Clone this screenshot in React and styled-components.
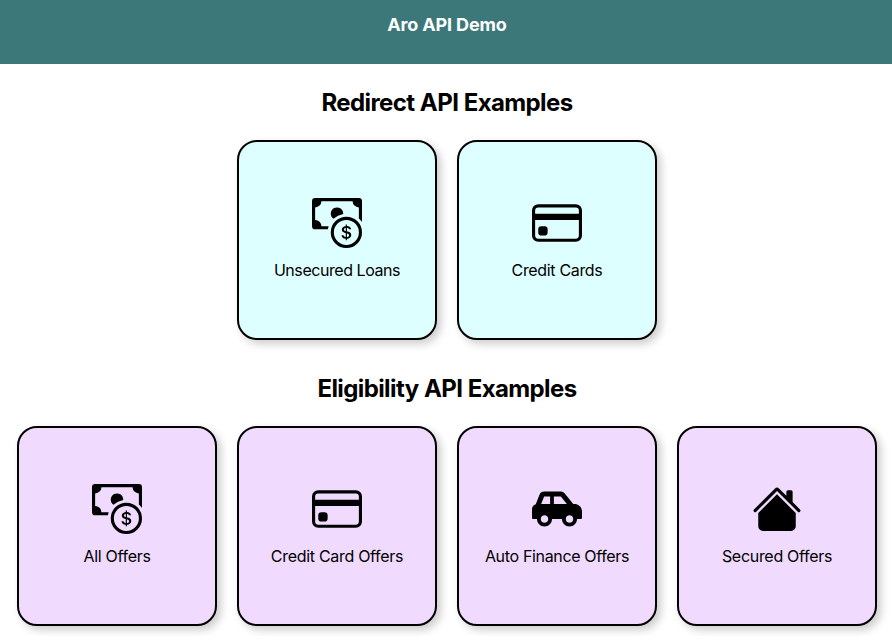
import React from "react";
import styled, { createGlobalStyle } from "styled-components";
import { BsCashCoin, BsCreditCard, BsHouseFill } from "react-icons/bs";
import { FaCarSide } from "react-icons/fa";

const GlobalStyle = createGlobalStyle`
  body { margin: 0; background: #fff; color: #000; font-family: Inter, sans-serif; overflow: hidden; }
  * { box-sizing: border-box; }
`;
const Header = styled.header`
  height: 64px; background: #3c787a; color: #fff; text-align: center;
`;
const Brand = styled.h1`
  margin: 0; padding: 14px 0 0 2px; font-size: 18px; line-height: 22px; font-weight: 700;
  letter-spacing: -0.16px;
`;
const Section = styled.section`
  display: flex; flex-direction: column; align-items: center; height: 286px; padding-left: 2px;
`;
const Title = styled.h2`
  margin: 24px 0 23px; font-size: 24px; line-height: 29px; font-weight: 700;
  letter-spacing: -0.6px; word-spacing: 0.3px;
`;
const Row = styled.div`
  display: flex; gap: 20px;
`;
const Card = styled.div`
  width: 200px; height: 200px; border: 2px solid #000; border-radius: 20px;
  background: ${(p) => p.$bg}; box-shadow: 4px 4px 8px rgba(0, 0, 0, 0.2);
  display: flex; flex-direction: column; align-items: center; padding-top: 56px;
`;
const Label = styled.span`
  margin-top: 12px; font-size: 16px; line-height: 20px; letter-spacing: ${(p) => p.$tracking}px;
`;
const Item = ({ icon: Icon, bg, tracking = -0.3, children }) => (
  <Card $bg={bg}><Icon size={50} /><Label $tracking={tracking}>{children}</Label></Card>
);

const CYAN = "#deffff";
const LILAC = "#f0dbff";

export default function App() {
  return (
    <>
      <GlobalStyle />
      <Header><Brand>Aro API Demo</Brand></Header>
      <Section>
        <Title>Redirect API Examples</Title>
        <Row>
          <Item bg={CYAN} icon={BsCashCoin} tracking={-0.44}>Unsecured Loans</Item>
          <Item bg={CYAN} icon={BsCreditCard} tracking={-0.34}>Credit Cards</Item>
        </Row>
      </Section>
      <Section>
        <Title>Eligibility API Examples</Title>
        <Row>
          <Item bg={LILAC} icon={BsCashCoin}>All Offers</Item>
          <Item bg={LILAC} icon={BsCreditCard}>Credit Card Offers</Item>
          <Item bg={LILAC} icon={FaCarSide} tracking={-0.34}>Auto Finance Offers</Item>
          <Item bg={LILAC} icon={BsHouseFill}>Secured Offers</Item>
        </Row>
      </Section>
    </>
  );
}
